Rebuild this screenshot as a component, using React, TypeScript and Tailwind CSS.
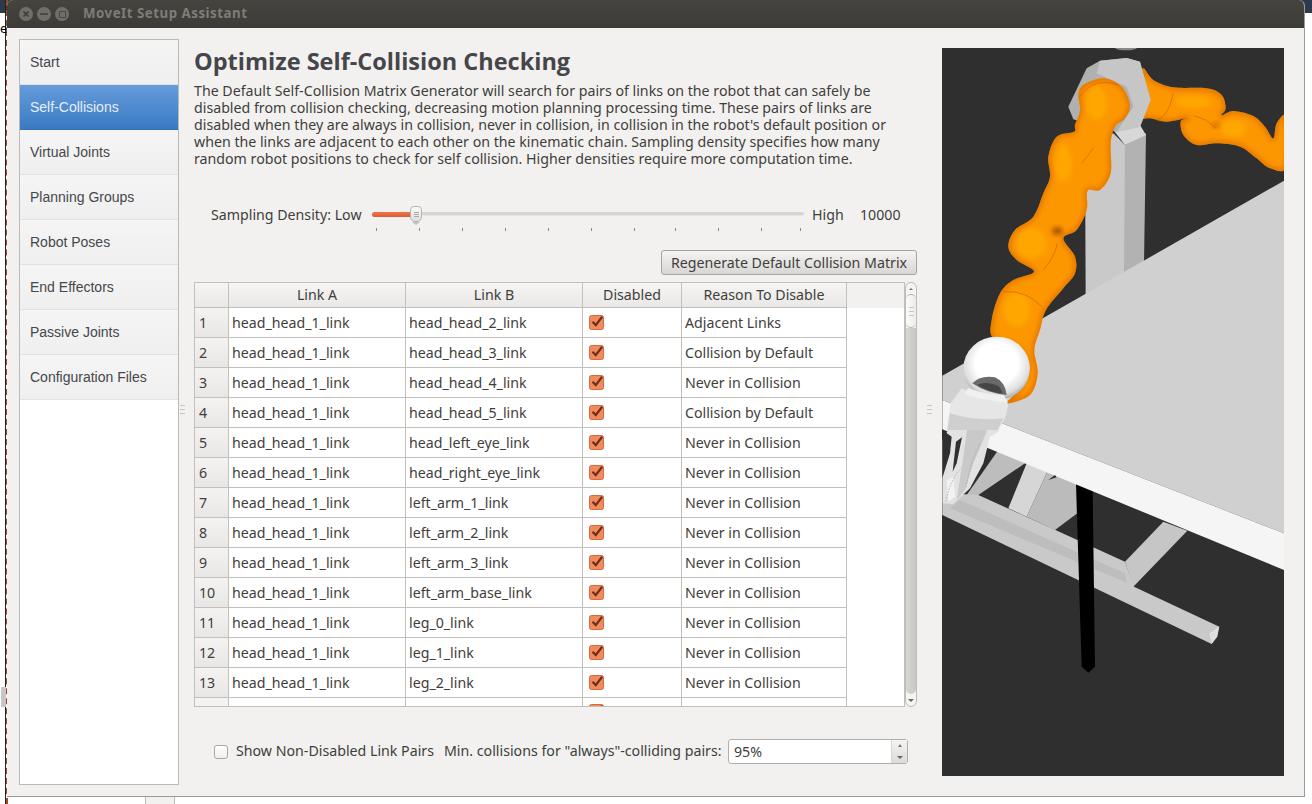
import React from "react";

type P = [number, number];
function smooth(pts: P[], closed = true) {
  const n = pts.length;
  const at = (i: number) => pts[(i + n) % n];
  let d = `M${pts[0][0]} ${pts[0][1]}`;
  for (let i = 0; i < (closed ? n : n - 1); i++) {
    const p0 = at(i - 1), p1 = at(i), p2 = at(i + 1), p3 = at(i + 2);
    d += `C${p1[0] + (p2[0] - p0[0]) / 6} ${p1[1] + (p2[1] - p0[1]) / 6} ${p2[0] - (p3[0] - p1[0]) / 6} ${p2[1] - (p3[1] - p1[1]) / 6} ${p2[0]} ${p2[1]}`;
  }
  return d + (closed ? "Z" : "");
}

const leftArm: P[] = [[430,165],[490,145],[545,170],[570,225],[555,265],[525,290],[512,340],[512,430],[480,480],[443,482],[440,540],[410,600],[370,625],[405,680],[405,730],[370,775],[318,840],[300,900],[283,960],[293,1030],[270,1095],[200,1120],[235,1080],[262,1020],[240,960],[160,925],[155,870],[180,790],[220,750],[282,725],[230,690],[205,650],[225,600],[280,560],[310,490],[330,440],[325,380],[350,320],[402,305],[405,285],[420,240],[415,195]];
const rightArm: P[] = [[610,115],[640,150],[700,172],[800,175],[845,195],[857,235],[845,256],[880,243],[940,258],[975,290],[1000,325],[1010,280],[1040,262],[1040,410],[990,415],[950,385],[900,350],[830,340],[770,345],[730,315],[722,275],[740,265],[680,275],[630,265],[600,262],[600,210],[600,150]];

function Robot() {
  const l = smooth(leftArm);
  const r = smooth(rightArm);
  return (
    <svg viewBox="942 48 342 728" className="block w-full h-full">
      <defs>
        <radialGradient id="ball" cx="0.5" cy="0.42" r="0.58">
          <stop offset="0.55" stopColor="#ffffff" />
          <stop offset="0.85" stopColor="#dedede" />
          <stop offset="1" stopColor="#a8a8a8" />
        </radialGradient>
        <clipPath id="clipL"><path d={l} /></clipPath>
        <clipPath id="clipR"><path d={r} /></clipPath>
        <filter id="soft" x="-30%" y="-30%" width="160%" height="160%">
          <feGaussianBlur stdDeviation="8" />
        </filter>
      </defs>
      <rect x="942" y="48" width="342" height="728" fill="#2f2f2f" />

      <g transform="translate(940 30) scale(0.33333)">
        <ellipse cx="558" cy="52" rx="34" ry="9" fill="#8a8a8a" />
        {/* post */}
        <polygon points="435,340 520,310 555,345 555,730 437,800" fill="#c9c9c9" />
        <polygon points="555,345 618,310 612,700 552,730" fill="#b2b2b2" />
        <polygon points="520,300 600,285 618,315 555,345" fill="#d8d8d8" />
      </g>

      <g transform="translate(940 400) scale(0.33333)">
        {/* frame under the table */}
        <polygon points="80,285 175,150 255,190 115,285" fill="#bdbdbd" />
        <polygon points="260,190 322,215 260,350 205,325" fill="#d6d6d6" />
        <polygon points="322,215 412,250 412,340 345,390 260,350" fill="#bbbbbb" />
        <polygon points="670,365 742,392 580,560 555,485" fill="#c6c6c6" />
        <polygon points="7,310 60,282 115,285 555,485 582,560 838,680 815,732 7,345" fill="#c9c9c9" />
        <polygon points="60,300 555,520 560,548 30,325" fill="#bdbdbd" />
        <polygon points="838,680 832,710 815,732 808,700" fill="#e0e0e0" />
        <polygon points="408,252 458,270 465,800 445,818 425,800" fill="#000000" />
        {/* table */}
        <polygon points="7,-73 1032,-658 1032,400 7,0" fill="#d0d0d0" />
        <polygon points="7,0 1032,400 1032,510 145,145 7,88" fill="#f5f5f5" />
        <polygon points="325,240 345,225 350,232" fill="#2f2f2f" />
        {/* fingers */}
        <polygon points="7,120 60,30 190,45 175,95 150,110 130,190 90,265 40,312 7,310" fill="#e2e2e2" />
        <polygon points="7,90 35,110 30,160 7,235" fill="#2f2f2f" />
        <polygon points="48,125 66,112 50,190 38,215" fill="#2f2f2f" />
        <polygon points="85,60 130,60 140,95 100,190 75,270 50,300 70,170" fill="#c9c9c9" />
        <polygon points="20,240 40,230 45,290 25,305" fill="#f2f2f2" />
        <g fill="none" stroke="#9c9c9c" strokeWidth="2" strokeDasharray="5 4">
          <path d="M18 305Q30 240 62 205" />
          <path d="M78 262Q90 190 120 130" />
          <path d="M40 70Q60 55 82 60" />
        </g>
      </g>

      <g transform="translate(940 30) scale(0.33333)">
        {/* right arm passes behind the hub */}
        <path d={r} fill="#fd9700" />
        <g clipPath="url(#clipR)">
          <g filter="url(#soft)" fill="none" stroke="#d86a00" strokeWidth="14" opacity="0.8"><path d={r} /></g>
          <g filter="url(#soft)" fill="#ffac00" opacity="0.8">
            <ellipse cx="880" cy="295" rx="40" ry="25" />
            <ellipse cx="760" cy="215" rx="55" ry="18" />
          </g>
          <ellipse cx="828" cy="285" rx="12" ry="9" fill="#b85a00" opacity="0.6" filter="url(#soft)" />
        </g>
        {/* hub */}
        <polygon points="385,230 440,115 480,92 560,84 600,95 632,210 600,290 530,305 400,268" fill="#b0b0b0" />
        <polygon points="470,130 480,92 560,84 600,95 632,210 600,290 530,305 580,230 560,170" fill="#c6c6c6" />
        {/* left arm */}
        <path d={l} fill="#fd9700" />
        <g clipPath="url(#clipL)">
          <g filter="url(#soft)" fill="none" stroke="#d86a00" strokeWidth="14" opacity="0.8"><path d={l} /></g>
          <g filter="url(#soft)" fill="#ffac00" opacity="0.8">
            <ellipse cx="275" cy="640" rx="45" ry="45" />
            <ellipse cx="230" cy="840" rx="40" ry="50" />
            <ellipse cx="370" cy="400" rx="25" ry="55" />
            <ellipse cx="470" cy="220" rx="30" ry="50" />
          </g>
          <ellipse cx="352" cy="603" rx="16" ry="12" fill="#a85000" filter="url(#soft)" />
        </g>
        <g fill="none" stroke="#c96500" strokeWidth="2.5" opacity="0.8">
          <path d="M420 200Q460 140 535 165" />
          <path d="M310 720Q345 680 352 640" />
          <path d="M190 785Q260 780 305 830" />
          <path d="M425 400Q445 375 462 352" />
          <path d="M760 258Q800 265 828 295" />
          <path d="M650 270Q685 262 700 190" />
        </g>
        {/* gripper base and wrist ball */}
        <path d="M65 1075Q130 1110 198 1092L204 1125Q200 1170 172 1200L20 1200L32 1120Z" fill="#e6e6e6" />
        <path d="M30 1150Q110 1175 190 1165L172 1200L22 1200Z" fill="#cfcfcf" />
        <ellipse cx="170" cy="1015" rx="100" ry="95" fill="url(#ball)" />
        <path d="M97 1060Q120 1035 165 1042Q195 1055 200 1095Q140 1090 97 1060Z" fill="#6a6a6a" />
        <path d="M112 1064Q140 1052 175 1068Q185 1078 188 1090Q145 1086 112 1064Z" fill="#454545" />
        <path d="M85 1074Q140 1096 192 1095L202 1118Q130 1112 72 1092Z" fill="#f0f0f0" />
      </g>
    </svg>
  );
}

function Check() {
  return (
    <svg width="16" height="16" viewBox="0 0 16 16" className="block">
      <rect x="0.5" y="0.5" width="14" height="14" rx="2" fill="#f28a60" stroke="#d9693f" />
      <path d="M3.5 6.8 L6.8 10 L13.2 1.8" fill="none" stroke="#6e3018" strokeWidth="2.2" />
    </svg>
  );
}

const nav = ["Start", "Self-Collisions", "Virtual Joints", "Planning Groups", "Robot Poses", "End Effectors", "Passive Joints", "Configuration Files"];
const rows: [string, string][] = [
  ["head_head_2_link", "Adjacent Links"],
  ["head_head_3_link", "Collision by Default"],
  ["head_head_4_link", "Never in Collision"],
  ["head_head_5_link", "Collision by Default"],
  ["head_left_eye_link", "Never in Collision"],
  ["head_right_eye_link", "Never in Collision"],
  ["left_arm_1_link", "Never in Collision"],
  ["left_arm_2_link", "Never in Collision"],
  ["left_arm_3_link", "Never in Collision"],
  ["left_arm_base_link", "Never in Collision"],
  ["leg_0_link", "Never in Collision"],
  ["leg_1_link", "Never in Collision"],
  ["leg_2_link", "Never in Collision"],
];
const para = [
  "The Default Self-Collision Matrix Generator will search for pairs of links on the robot that can safely be",
  "disabled from collision checking, decreasing motion planning processing time. These pairs of links are",
  "disabled when they are always in collision, never in collision, in collision in the robot's default position or",
  "when the links are adjacent to each other on the kinematic chain. Sampling density specifies how many",
  "random robot positions to check for self collision. Higher densities require more computation time.",
];
const ticks = [0, 43, 86, 129, 172, 215, 258, 299, 342, 385, 424];
const hCell = "h-[25px] p-0 text-center font-normal border-r border-b border-[#c2c0bc] bg-gradient-to-b from-[#f6f5f4] to-[#e9e8e6]";
const cell = "p-0 pl-[3px] text-left border-r border-b border-[#c2c0bc] bg-white whitespace-nowrap overflow-hidden";

function Grip() {
  return (
    <div className="w-[5px] h-[9px] flex flex-col justify-between">
      <div className="h-px bg-[#c6c6c2]" />
      <div className="h-px bg-[#c6c6c2]" />
      <div className="h-px bg-[#c6c6c2]" />
    </div>
  );
}

export default function App() {
  return (
    <div
      className="relative w-[1312px] h-[804px] bg-white overflow-hidden text-[#3f3e3a]"
      style={{ fontFamily: '"Noto Sans", "Open Sans", sans-serif' }}
    >
      {/* desktop behind the window */}
      <div className="absolute left-0 top-0 w-full h-[13px] bg-[#2c3a4c]" />
      <div className="absolute left-[5px] top-0 h-full w-px bg-[#222]" />
      <div className="absolute left-[6px] top-0 h-full border-l-2 border-dashed border-[#a04a20]" />
      <div className="absolute left-0 top-[21px] text-[13px] leading-[14px] text-black">e</div>
      <div className="absolute left-[1px] top-[687px] w-[5px] h-[20px] bg-[#c8c8c8]" />
      <div className="absolute left-[145px] top-[797px] w-[30px] h-[7px] bg-[#f2f1f0] border-x border-[#bdbdbd]" />

      <div className="relative ml-[7px] w-[1298px] h-[797px] bg-[#f2f1f0] rounded-t-[6px] overflow-hidden border-r border-b border-[#9a9a98] flex flex-col">
        {/* title bar */}
        <div className="h-[28px] shrink-0 bg-gradient-to-b from-[#45443f] to-[#3c3b37] flex items-center pl-[12px]">
          <div className="flex gap-[4px]">
            <div className="w-[14px] h-[14px] rounded-full bg-[#6f6e69] flex items-center justify-center">
              <svg width="8" height="8" viewBox="0 0 8 8"><path d="M1.5 1.5L6.5 6.5M6.5 1.5L1.5 6.5" stroke="#3c3b37" strokeWidth="1.6" /></svg>
            </div>
            <div className="w-[14px] h-[14px] rounded-full bg-[#6f6e69] flex items-center justify-center">
              <div className="w-[8px] h-[2px] bg-[#4a4945]" />
            </div>
            <div className="w-[14px] h-[14px] rounded-full bg-[#6f6e69] flex items-center justify-center">
              <div className="w-[7px] h-[7px] border border-[#4a4945]" />
            </div>
          </div>
          <div className="ml-[14px] text-[13.3px] font-bold tracking-[0.5px] text-[#7e7d78] whitespace-nowrap">MoveIt Setup Assistant</div>
        </div>

        <div className="flex flex-1 pl-[12px] pt-[11px]">
          {/* sidebar */}
          <div className="w-[160px] h-[746px] shrink-0 border border-[#bcbab6] bg-white" style={{ fontFamily: '"Liberation Sans", Arial, sans-serif' }}>
            {nav.map((n) =>
              n === "Self-Collisions" ? (
                <div key={n} className="h-[45px] flex items-center pl-[10px] text-[14px] text-[#e6effa] bg-gradient-to-b from-[#659cdb] to-[#3a7ac3] border-b border-[#3570b5]">{n}</div>
              ) : (
                <div key={n} className="h-[45px] flex items-center pl-[10px] text-[14px] text-[#45474c] bg-gradient-to-b from-[#f5f5f5] to-[#efefef] border-b border-[#e2e2e2]">{n}</div>
              )
            )}
          </div>

          {/* splitter */}
          <div className="w-[15px] shrink-0 flex items-center justify-center pb-[17px] pr-[9px] pl-[1px]">
            <Grip />
          </div>

          {/* main */}
          <div className="w-[723px] shrink-0 flex flex-col text-[14.2px]">
            <h1 className="mt-[6px] h-[32px] leading-[32px] font-bold text-[#45454a] whitespace-nowrap" style={{ fontFamily: '"Open Sans", sans-serif', fontSize: 23.5 }}>Optimize Self-Collision Checking</h1>
            <div className="mt-[5px] leading-[17px]">
              {para.map((l) => (
                <div key={l} className="whitespace-nowrap">{l}</div>
              ))}
            </div>

            {/* slider */}
            <div className="mt-[38px] h-[20px] flex items-center">
              <div className="ml-[17px] w-[161px] whitespace-nowrap">Sampling Density: Low</div>
              <div className="relative w-[432px] h-[20px]">
                <div className="absolute left-0 right-0 top-[7px] h-[4px] rounded-full bg-[#d6d5d2] border-b border-[#e8e7e5]" />
                <div className="absolute left-0 w-[40px] top-[7px] h-[5px] rounded-full bg-gradient-to-b from-[#f0754a] to-[#de5a30]" />
                <div className="absolute left-[38px] top-[1px] w-[12px] h-[16px] rounded-t-[4px] rounded-b-[5px] bg-gradient-to-b from-[#fbfbfa] to-[#dededc] border border-[#b5b4b0] flex items-center justify-center">
                  <div className="w-[5px] h-[5px] flex flex-col justify-between">
                    <div className="h-px bg-[#a9a8a4]" /><div className="h-px bg-[#a9a8a4]" /><div className="h-px bg-[#a9a8a4]" />
                  </div>
                </div>
                <div className="absolute left-[40px] top-[17px] w-0 h-0 border-x-[4px] border-x-transparent border-t-[3px] border-t-[#c2c1bd]" />
              </div>
              <div className="ml-[8px] w-[48px]">High</div>
              <div>10000</div>
            </div>
            <div className="ml-[182px] relative h-[5px] mt-[3px]">
              {ticks.map((t) => (
                <div key={t} className="absolute top-0 w-px h-[3px] bg-[#8a8986]" style={{ left: t }} />
              ))}
            </div>

            {/* button */}
            <div className="mt-[17px] flex justify-end">
              <button className="w-[256px] h-[25px] rounded-[3px] border border-[#a5a4a0] bg-gradient-to-b from-[#f5f4f3] to-[#d8d7d4] text-[#3f3e3a] whitespace-nowrap">Regenerate Default Collision Matrix</button>
            </div>

            {/* table + scrollbar */}
            <div className="mt-[7px] flex h-[425px]">
              <div className="w-[711px] h-[425px] overflow-hidden border border-[#c2c0bc] bg-white">
                <table className="table-fixed border-separate border-spacing-0 w-[709px]">
                  <colgroup>
                    <col className="w-[34px]" />
                    <col className="w-[177px]" />
                    <col className="w-[177px]" />
                    <col className="w-[99px]" />
                    <col className="w-[165px]" />
                    <col className="w-[57px]" />
                  </colgroup>
                  <thead>
                    <tr>
                      <th className={hCell}></th>
                      <th className={hCell}>Link A</th>
                      <th className={hCell}>Link B</th>
                      <th className={hCell}>Disabled</th>
                      <th className={hCell}>Reason To Disable</th>
                      <th className="h-[25px] p-0 bg-[#f2f1f0]"></th>
                    </tr>
                  </thead>
                  <tbody>
                    {rows.map(([b, r], i) => (
                      <tr key={b}>
                        <td className="h-[30px] p-0 pl-[4px] text-left border-r border-b border-[#c2c0bc] bg-gradient-to-b from-[#f4f3f2] to-[#e8e7e5]">{i + 1}</td>
                        <td className={cell}>head_head_1_link</td>
                        <td className={cell}>{b}</td>
                        <td className="h-[30px] p-0 pl-[6px] border-r border-b border-[#c2c0bc] bg-white"><Check /></td>
                        <td className={cell}>{r}</td>
                        <td className="p-0 bg-white"></td>
                      </tr>
                    ))}
                    <tr>
                      <td className="h-[30px] p-0 border-r border-[#c2c0bc] bg-[#f4f3f2]"></td>
                      <td className="p-0 border-r border-[#c2c0bc]"></td>
                      <td className="p-0 border-r border-[#c2c0bc]"></td>
                      <td className="p-0 pl-[6px] pt-[6px] align-top border-r border-[#c2c0bc]"><Check /></td>
                      <td className="p-0 border-r border-[#c2c0bc]"></td>
                      <td className="p-0"></td>
                    </tr>
                  </tbody>
                </table>
              </div>
              <div className="w-[12px] h-[425px] rounded-[6px] border border-[#bdbcb8] bg-[#f5f4f3] flex flex-col items-center overflow-hidden">
                <div className="h-[11px] shrink-0 flex items-center justify-center">
                  <div className="w-0 h-0 border-x-[2px] border-x-transparent border-b-[2px] border-b-[#777]" />
                </div>
                <div className="w-full h-[34px] shrink-0 rounded-[5px] border-y border-[#b5b4b0] bg-gradient-to-r from-[#fbfbfa] to-[#ecebe9] flex items-center justify-center">
                  <Grip />
                </div>
                <div className="w-full flex-1 bg-gradient-to-r from-[#d8d7d4] to-[#c7c6c3] rounded-b-[5px]" />
                <div className="h-[12px] shrink-0 flex items-center justify-center">
                  <div className="w-0 h-0 border-x-[3px] border-x-transparent border-t-[3px] border-t-[#666]" />
                </div>
              </div>
            </div>

            {/* bottom controls */}
            <div className="mt-[32px] h-[25px] flex items-center whitespace-nowrap">
              <div className="ml-[20px] w-[14px] h-[14px] rounded-[3px] border border-[#a9a8a4] bg-gradient-to-b from-white to-[#efeeec]" />
              <div className="ml-[8px] w-[208px] -mt-[2px]">Show Non-Disabled Link Pairs</div>
              <div className="w-[284px] -mt-[2px]">Min. collisions for "always"-colliding pairs:</div>
              <div className="w-[180px] h-[25px] rounded-[3px] border border-[#b0afab] bg-white flex">
                <div className="flex-1 pl-[5px] flex items-center">95%</div>
                <div className="w-[16px] flex flex-col items-center justify-around border-l border-[#d8d7d4] bg-gradient-to-b from-[#f5f4f3] to-[#dcdbd8]">
                  <div className="w-0 h-0 border-x-[2px] border-x-transparent border-b-[3px] border-b-[#777]" />
                  <div className="w-0 h-0 border-x-[3px] border-x-transparent border-t-[3px] border-t-[#666]" />
                </div>
              </div>
            </div>
          </div>

          {/* splitter */}
          <div className="w-[25px] shrink-0 flex items-center justify-center pb-[17px]">
            <Grip />
          </div>

          {/* 3D view */}
          <div className="w-[342px] h-[728px] mt-[9px] shrink-0 bg-[#2f2f2f]">
            <Robot />
          </div>
        </div>
      </div>
    </div>
  );
}
